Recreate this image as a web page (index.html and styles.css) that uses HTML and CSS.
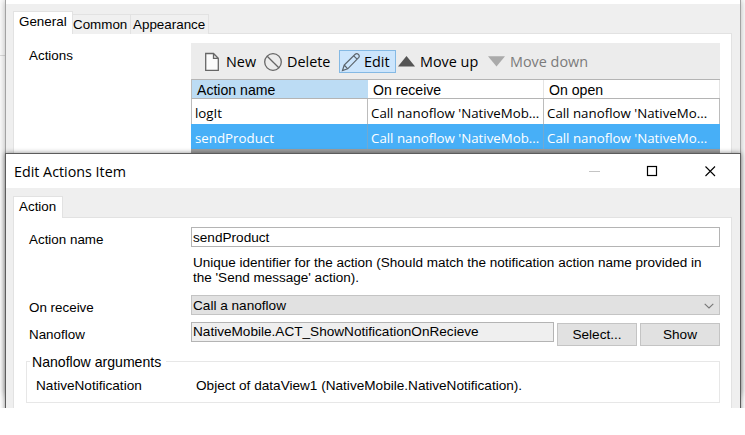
FILE: index.html
```html
<!DOCTYPE html>
<html lang="en">
<head>
<meta charset="utf-8">
<title>Edit Actions Item</title>
<link rel="stylesheet" href="styles.css">
</head>
<body>
<div class="scene">
  <div class="edge-line"></div>
  <section class="window parent">
    <div class="tabs">
      <div class="tab active"><span>General</span></div>
      <div class="tab common"><span>Common</span></div>
      <div class="tab appearance"><span>Appearance</span></div>
    </div>
    <div class="panel list-panel">
      <div class="label"><span>Actions</span></div>
      <div class="grid">
        <div class="toolbar">
          <div class="tool new">
            <svg width="16" height="20" viewBox="0 0 16 20"><path d="M1.7 1.5H9.5L14.3 6.3V18.3H1.7Z M9.5 1.5V6.3H14.3" fill="#fbfbfb" stroke="#666" stroke-width="1.3"/></svg>
            <span>New</span>
          </div>
          <div class="tool delete">
            <svg width="20" height="20" viewBox="0 0 20 20"><circle cx="10" cy="10" r="8.3" fill="none" stroke="#666" stroke-width="1.3"/><path d="M4.2 4.2L15.8 15.8" stroke="#666" stroke-width="1.3"/></svg>
            <span>Delete</span>
          </div>
          <div class="tool edit">
            <svg width="20" height="20" viewBox="0 0 20 20"><path d="M1.5 18.5L3.2 13L14.2 2.2Q15.8 .8 17.4 2.4Q19 4 17.6 5.7L6.7 16.8Z M3.2 13L6.7 16.8 M12.7 3.8L16.1 7.2" fill="none" stroke="#5c646b" stroke-width="1.2"/></svg>
            <span>Edit</span>
          </div>
          <div class="tool up">
            <svg width="17" height="11" viewBox="0 0 17 11"><path d="M0 10.5L8.5 0L17 10.5Z" fill="#555"/></svg>
            <span>Move up</span>
          </div>
          <div class="tool down">
            <svg width="17" height="11" viewBox="0 0 17 11"><path d="M0 .3H17L8.5 10.5Z" fill="#aaa"/></svg>
            <span>Move down</span>
          </div>
        </div>
        <div class="row head">
          <div class="cell sorted"><span>Action name</span></div>
          <div class="cell"><span>On receive</span></div>
          <div class="cell"><span>On open</span></div>
        </div>
        <div class="row">
          <div class="cell"><span>logIt</span></div>
          <div class="cell"><span>Call nanoflow 'NativeMob...</span></div>
          <div class="cell"><span>Call nanoflow 'NativeMo...</span></div>
        </div>
        <div class="row selected">
          <div class="cell"><span>sendProduct</span></div>
          <div class="cell"><span>Call nanoflow 'NativeMob...</span></div>
          <div class="cell"><span>Call nanoflow 'NativeMo...</span></div>
        </div>
        <div class="grid-rest"></div>
      </div>
    </div>
  </section>

  <section class="window dialog">
    <header class="titlebar">
      <span>Edit Actions Item</span>
      <svg width="127" height="16" viewBox="0 0 127 16"><path d="M0 8.5H11" stroke="#c4c4c4"/><rect x="58.5" y="3.5" width="9" height="9" fill="none" stroke="#000" stroke-width="1.2"/><path d="M116.5 3.5L126 13M126 3.5L116.5 13" stroke="#000" stroke-width="1.1"/></svg>
    </header>
    <div class="dialog-body">
      <div class="tabs">
        <div class="tab active"><span>Action</span></div>
      </div>
      <div class="panel form">
        <div class="field">
          <label class="label"><span>Action name</span></label>
          <div class="input"><span>sendProduct</span></div>
        </div>
        <p class="hint">Unique identifier for the action (Should match the notification action name provided in<br>the 'Send message' action).</p>
        <div class="field">
          <label class="label"><span>On receive</span></label>
          <div class="input select"><span>Call a nanoflow</span>
            <svg width="10" height="6" viewBox="0 0 10 6"><path d="M.7 .8L5 5L9.3 .8" fill="none" stroke="#777" stroke-width="1.1"/></svg>
          </div>
        </div>
        <div class="field flow-field">
          <label class="label"><span>Nanoflow</span></label>
          <div class="input readonly"><span>NativeMobile.ACT_ShowNotificationOnRecieve</span></div>
          <button class="btn"><span>Select...</span></button>
          <button class="btn"><span>Show</span></button>
        </div>
        <div class="group">
          <div class="legend"><span>Nanoflow arguments</span></div>
          <div class="arg">
            <span class="arg-name">NativeNotification</span>
            <span>Object of dataView1 (NativeMobile.NativeNotification).</span>
          </div>
        </div>
      </div>
    </div>
  </section>
</div>
</body>
</html>
```
FILE: styles.css
```css
* { box-sizing: border-box; }
body {
  margin: 0;
  background: #fff;
  color: #000;
  font: 13.4px/16px "Liberation Sans", Arial, sans-serif;
}
svg { display: block; flex: none; }
span { white-space: nowrap; }
.scene {
  position: relative;
  width: 745px;
  height: 408px;
  overflow: hidden;
  background: #fdfdfd;
}
.edge-line {
  position: absolute;
  left: 0;
  top: 55px;
  width: 5px;
  height: 1px;
  background: #ddd;
}
.window { position: absolute; left: 5px; width: 736px; }
.parent {
  top: 0;
  height: 395px;
  border: solid #a2a2a2;
  border-width: 0 1px;
  background: linear-gradient(#fff 4px, #efefef 4px);
  box-shadow: 0 0 7px rgba(0, 0, 0, .3);
  padding: 11px 8px 0 7px;
}
.tabs { display: flex; align-items: flex-end; height: 23px; position: relative; }
.tab {
  height: 20px;
  border: 1px solid #e2e2e2;
  border-width: 1px 1px 0 0;
  background: #f0f0f0;
  white-space: nowrap;
  padding-top: 2px;
}
.tab.active {
  height: 23px;
  background: #fff;
  border-left-width: 1px;
  width: 60px;
  padding: 2px 0 0 5px;
}
.common { width: 58px; }
.appearance { width: 78px; padding-left: 2px; }
.panel { border: 1px solid #e2e2e2; background: #fff; margin-top: -1px; }
.list-panel { display: flex; height: 375px; padding: 9px 0 0 15px; }
.label { width: 162px; flex: none; }
.list-panel .label { padding-top: 5px; }
.grid { width: 529px; flex: none; }
.toolbar {
  display: flex;
  align-items: center;
  height: 36px;
  padding: 1px 0 0 13px;
  background: #ececec;
  font: 14.4px/20px "Open Sans", "Segoe UI", sans-serif;
}
.tool { display: flex; align-items: center; white-space: nowrap; }
.tool span { padding-top: 1px; }
.tool svg { margin-right: 6px; }
.new { width: 59px; }
.delete { width: 76px; }
.delete svg { margin-right: 4px; }
.edit {
  width: 57px;
  height: 23px;
  background: #cce5fc;
  border: 1px solid #84b9e4;
  padding-left: 1px;
  margin-right: 2px;
}
.edit svg { margin-right: 3px; }
.up { width: 90px; }
.up svg, .down svg { margin-right: 5px; }
.down { color: #7b7b7b; }
.row {
  display: grid;
  grid-template-columns: 176px 176px 176px;
  height: 25px;
  background: #fff;
  border-left: 1px solid #bcbcbc;
  font: 13.3px/20px "Open Sans", "Segoe UI", sans-serif;
}
.cell { border-right: 1px solid #bcbcbc; padding: 4px 0 0 3px; white-space: nowrap; overflow: hidden; }
.head {
  height: 20px;
  border-top: 1px solid #b4b4b4;
  border-bottom: 1px solid #b4b4b4;
  font: 14.1px/16px "Liberation Sans", Arial, sans-serif;
}
.head .cell { padding: 2px 0 0 5px; border-color: #e4e4e4; }
.head .sorted { background: #bcdcf4; border-color: #bcdcf4; }
.selected { background: #47aff7; border-color: #47aff7; color: #fff; }
.selected .cell { border-color: #71a9d2; }
.selected .cell:last-child { border-color: #47aff7; }
.grid-rest { height: 5px; background: #9f9f9f; }

.dialog {
  top: 153px;
  height: 280px;
  border: 1px solid #5c5c5c;
  background: #fff;
  box-shadow: 0 0 5px rgba(0, 0, 0, .45);
}
.titlebar {
  display: flex;
  align-items: center;
  justify-content: space-between;
  height: 34px;
  padding: 0 24px 0 8px;
  font: 14.3px/20px "Open Sans", "Segoe UI", sans-serif;
}
.titlebar span { padding-top: 1px; }
.dialog-body { background: #efefef; padding: 8px 8px 0 7px; height: 244px; }
.dialog-body .tabs { height: 22px; }
.dialog-body .tab.active { width: 50px; height: 22px; }
.form { height: 210px; padding: 9px 0 0 12px; }
.field { display: flex; align-items: flex-start; }
.form .label { width: 165px; padding: 5px 0 0 3px; }
.input {
  width: 529px;
  height: 20px;
  border: 1px solid #b4b4b4;
  padding: 2px 0 0 1px;
  font-size: 13.6px;
  white-space: nowrap;
}
.hint {
  margin: 7px 0 10px 167px;
  font-size: 13.53px;
  line-height: 15px;
  white-space: nowrap;
}
.select {
  display: flex;
  justify-content: space-between;
  background: #e1e1e1;
  border-color: #c4c4c4;
  padding-right: 5px;
}
.select svg { margin-top: 5px; }
.flow-field { margin-top: 6px; }
.flow-field .input { width: 363px; background: #efefef; margin-right: 3px; padding-top: 1px; }
.btn {
  width: 80px;
  height: 23px;
  margin: 1px 3px 0 0;
  padding: 0;
  border: 1px solid #c4c4c4;
  background: #e1e1e1;
  color: #000;
  font: inherit;
  font-size: 13.6px;
}
.group {
  width: 694px;
  height: 42px;
  margin-top: 15px;
  border: 1px solid #e7e7e7;
  font-size: 13.6px;
}
.legend { width: 136px; margin: -8px 0 0 3px; padding-left: 2px; background: #fff; font-size: 14.1px; }
.arg { display: flex; margin-top: 8px; padding-left: 9px; }
.arg-name { width: 160px; }
```
